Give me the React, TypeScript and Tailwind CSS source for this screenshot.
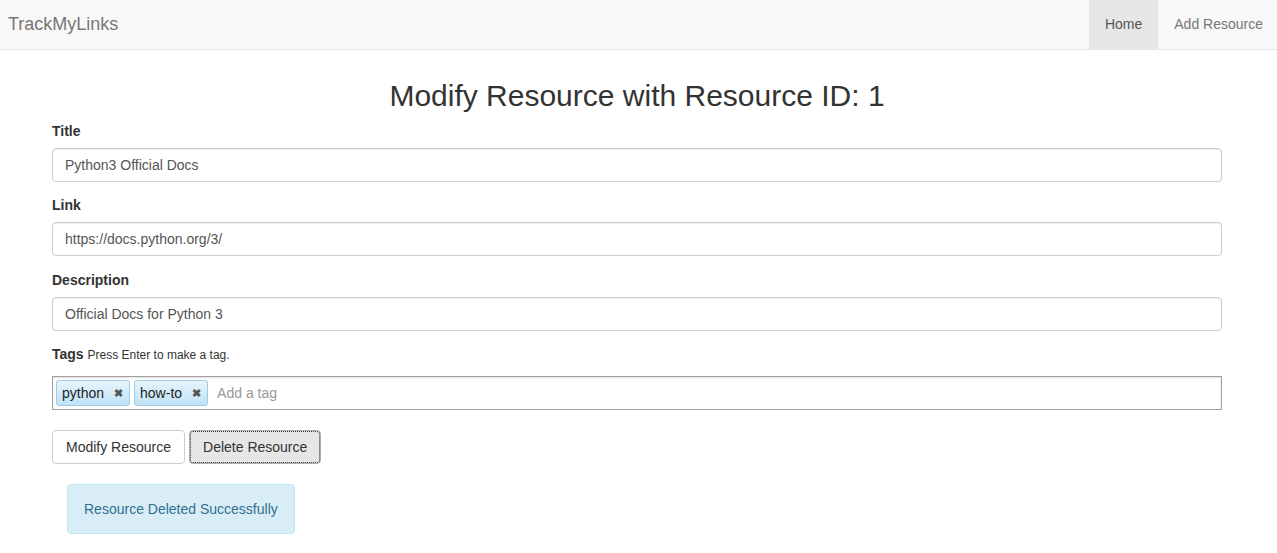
import React from "react"

const font = { fontFamily: '"Liberation Sans", Arial, sans-serif' }

function Field({ label, value, top = 0 }: { label: string; value: string; top?: number }) {
  return (
    <div className={top ? "mb-[13px] pt-[1px]" : "mb-[13px]"}>
      <label className="block text-[14px] leading-[20px] font-bold text-[#333] mb-[7px]">{label}</label>
      <div className="h-[34px] border border-[#ccc] rounded-[4px] px-[12px] flex items-center text-[14px] text-[#555] shadow-[inset_0_1px_1px_rgba(0,0,0,0.075)]">
        {value}
      </div>
    </div>
  )
}

function Tag({ text }: { text: string }) {
  return (
    <span className="inline-flex items-center h-[26px] px-[5px] border border-[#9fcbe3] rounded-[3px] bg-gradient-to-b from-[#e6f4fc] to-[#bfe3f7] text-[14px] text-[#222]">
      <span>{text}</span>
      <span className="ml-[10px] mr-[1px] text-[11px] font-bold text-[#555]">✖</span>
    </span>
  )
}

export default function App() {
  return (
    <div className="min-h-screen bg-white" style={font}>
      {/* Navbar */}
      <nav className="h-[50px] bg-[#f8f8f8] border-b border-[#e7e7e7] flex items-stretch justify-between">
        <div className="pl-[8px] flex items-center text-[18px] text-[#777]">TrackMyLinks</div>
        <div className="flex">
          <a className="px-[16px] flex items-center text-[14px] text-[#555] bg-[#e7e7e7]">Home</a>
          <a className="px-[16px] pr-[14px] flex items-center text-[14px] text-[#777]">Add Resource</a>
        </div>
      </nav>

      <div className="w-[1170px] ml-[52px]">
        <h2 className="mt-[29px] mb-[9px] text-center text-[30px] leading-[33px] text-[#333]">
          Modify Resource with Resource ID: 1
        </h2>

        <Field label="Title" value="Python3 Official Docs" />
        <Field label="Link" value="https://docs.python.org/3/" />
        <Field label="Description" value="Official Docs for Python 3" top={1} />

        <div className="mb-[20px]">
          <label className="block text-[14px] leading-[20px] text-[#333] mb-[11px]">
            <span className="font-bold">Tags</span> <span className="text-[12px]">Press Enter to make a tag.</span>
          </label>
          <div className="h-[34px] border border-[#a0a0a0] shadow-[inset_0_1px_2px_rgba(0,0,0,0.12)] flex items-center gap-[4px] px-[3px]">
            <Tag text="python" />
            <Tag text="how-to" />
            <span className="ml-[5px] text-[14px] text-[#999]">Add a tag</span>
          </div>
        </div>

        <div className="flex gap-[4px] mb-[20px]">
          <button className="h-[34px] px-[13px] border border-[#ccc] rounded-[4px] bg-white text-[14px] text-[#333]">
            Modify Resource
          </button>
          <button className="h-[34px] px-[13px] border border-[#adadad] rounded-[4px] bg-[#e6e6e6] text-[14px] text-[#333] outline-1 outline-dotted outline-[#333] -outline-offset-2">
            Delete Resource
          </button>
        </div>

        <div className="ml-[15px] inline-block px-[16px] py-[14px] leading-[20px] border border-[#bce8f1] rounded-[4px] bg-[#d9edf7] text-[14px] text-[#31708f]">
          Resource Deleted Successfully
        </div>
      </div>
    </div>
  )
}
